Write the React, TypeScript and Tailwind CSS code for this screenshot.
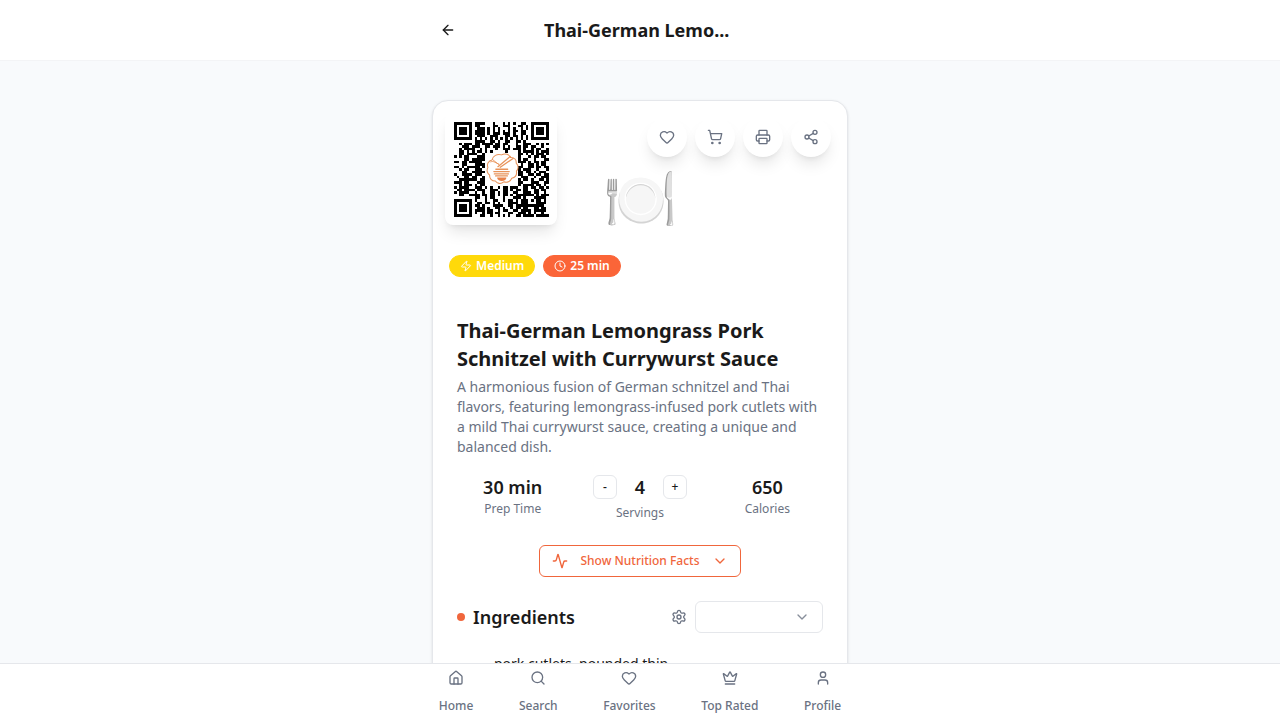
import React from "react";
import {
  Activity,
  ArrowLeft,
  ChevronDown,
  Clock,
  Crown,
  Heart,
  House,
  Printer,
  Search,
  Settings,
  Share2,
  ShoppingCart,
  User,
  Zap,
} from "lucide-react";

const QR: string[] = [
  "#######.####...#...#.#.#..##..#######",
  "#.....#.##.....##..###...##.#.#.....#",
  "#.###.#..###.#.#.#...#.#..#.#.#.###.#",
  "#.###.#.####.#.#.#.#.#.##.##..#.###.#",
  "#.###.#.####.#.###.###.#..##..#.###.#",
  "#.....#..###..###...##.##.#.#.#.....#",
  "#######.#.#.#.#.#.#.#.#.#.#.#.#######",
  "........####..##.#..##..##.#.........",
  "..#.###.##.####.##.##...#..###..#.#.#",
  "...###.###..##.###.#.#..##.##.##..#..",
  "..#.####..#.#...#..###.###.#..#.##..#",
  "..##.#.#.##.#.#.....#....#.####.#.###",
  "..##.####..#.............##.#.#.###.#",
  "#.#.##...###.............#...#.##.##.",
  "....##.#####.............#.##..#...##",
  "##.##.#####..............###.#.##.##.",
  "...##...####..............#..##.#.##.",
  "##.#.#####.#.............##..##.##.##",
  "..#.##..###..............#.###..#...#",
  "...##..#####.............##.##.#.###.",
  "#..####.###..............##..##.##.##",
  ".#..##.##..#..............###..#..###",
  "..#######.##.............#.##.#..##.#",
  "###.##...###.............##...###..##",
  "..#.###.#.##.............#.####.##.#.",
  "#.####..###.#.#..#.##.###..##.##.##.#",
  ".##.####.###..###..##.#.##.##..##.##.",
  "#.####..#..#..##.#.##..##..###.##..#.",
  "..##..####.##.##.#.##.#.#######.#.###",
  "........##..#.##...#...###.#...#####.",
  "#######.#...#..##..#.##.#.###.#.##.#.",
  "#.....#..##.##.#.#...####.###...####.",
  "#.###.#.##.#...####..##.###########..",
  "#.###.#..###.#..##.#..#.##.##..##.##.",
  "#.###.#.####.##..#.##..##.####.#####.",
  "#.....#.#..#.##.##...##..###.#.#..#..",
  "#######...##..#..#.#.#..##.####.#####",
];

const navItems = [
  { label: "Home", Icon: House },
  { label: "Search", Icon: Search },
  { label: "Favorites", Icon: Heart },
  { label: "Top Rated", Icon: Crown },
  { label: "Profile", Icon: User },
];

const actions = [
  { label: "Save to favorites", Icon: Heart },
  { label: "Add to shopping list", Icon: ShoppingCart },
  { label: "Print recipe", Icon: Printer },
  { label: "Share recipe", Icon: Share2 },
];

const title = "Thai-German Lemongrass Pork Schnitzel with Currywurst Sauce";

function shorten(text: string, length: number) {
  return text.length > length ? `${text.slice(0, length)}...` : text;
}

function QrCode() {
  const d = QR.map((row, y) =>
    row
      .split("")
      .map((c, x) => (c === "#" ? `M${x} ${y}h1v1h-1z` : ""))
      .join("")
  ).join("");
  return (
    <svg viewBox="-0.4 -0.4 37.4 37.4" className="size-24" role="img" aria-label="Recipe QR code">
      <path d={d} fill="#000" shapeRendering="crispEdges" />
      <g fill="none" stroke="#e8935a" strokeLinecap="round" strokeLinejoin="round">
        <path
          strokeWidth=".4"
          d="M18.5 12.8c1.5-.9 3 0 3.5 1 1.5-.1 2.4 1 2.2 2.2 1 .9 1 2.3.1 3.1.3 1.5-.5 2.5-1.8 2.8-.5 1.3-1.9 1.9-3.1 1.4-1.2 1-2.6.7-3.3-.3-1.4 0-2.4-1-2.2-2.3-1-.7-1.3-2-.7-3-.5-1.3.2-2.6 1.6-2.9.3-1.6 2-2.6 3.7-2z"
        />
        <path strokeWidth=".35" d="M14.3 15.5c1.2-.6 2.1.7 3.2.9M15 14.6l2.5 2" />
        <path strokeWidth=".5" d="m17.1 17.4 4.8-4M18 17.6l5-3.4" />
        <path strokeWidth=".5" d="M16.3 18.4h4.6M15.5 19.3h6M15.7 20.2h5.5M16.2 21h4.6" />
      </g>
      <path d="M16.8 21.6h3.6a1.8 1.4 0 0 1-3.6 0z" fill="#e8824a" />
    </svg>
  );
}

function RecipeHero() {
  return (
    <div className="relative flex h-48 items-center justify-center">
      <span className="text-6xl" role="img" aria-label="Plate">
        🍽️
      </span>
      <div className="absolute top-3 left-3 rounded-lg bg-white p-2 shadow-lg">
        <QrCode />
      </div>
      <div className="absolute top-4 right-4 flex gap-2">
        {actions.map(({ label, Icon }) => (
          <button
            key={label}
            type="button"
            aria-label={label}
            className="flex size-10 items-center justify-center rounded-full bg-white text-gray-500 shadow-lg"
          >
            <Icon className="size-4" />
          </button>
        ))}
      </div>
      <div className="absolute bottom-4 left-4 flex gap-2 text-xs font-semibold text-white">
        <span className="flex items-center gap-1 rounded-full border border-[#ffd90a] bg-[#ffd90a] px-2.5 py-0.5">
          <Zap className="size-3" />
          Medium
        </span>
        <span className="flex items-center gap-1 rounded-full border border-[#fb6538] bg-[#fb6538] px-2.5 py-0.5">
          <Clock className="size-3" />
          25 min
        </span>
      </div>
    </div>
  );
}

function Stats() {
  const [servings, setServings] = React.useState(4);
  const step =
    "flex size-6 items-center justify-center rounded-md border border-gray-200 bg-white text-xs font-medium";
  return (
    <div className="mt-4 grid grid-cols-3 gap-4 text-center">
      <div>
        <div className="text-lg font-semibold">30 min</div>
        <div className="text-xs text-gray-500">Prep Time</div>
      </div>
      <div>
        <div className="mb-1 flex items-center justify-center gap-2">
          <button
            type="button"
            aria-label="Fewer servings"
            className={step}
            onClick={() => setServings(Math.max(1, servings - 1))}
          >
            -
          </button>
          <span className="w-[30px] text-lg font-semibold">{servings}</span>
          <button
            type="button"
            aria-label="More servings"
            className={step}
            onClick={() => setServings(servings + 1)}
          >
            +
          </button>
        </div>
        <div className="text-xs text-gray-500">Servings</div>
      </div>
      <div>
        <div className="text-lg font-semibold">650</div>
        <div className="text-xs text-gray-500">Calories</div>
      </div>
    </div>
  );
}

export default function App() {
  return (
    <div className="min-h-screen bg-[#f8fafc] font-['Noto_Sans',sans-serif] text-[#1a1a1a]">
      <header className="sticky top-0 z-10 border-b border-gray-100 bg-white">
        <div className="mx-auto flex h-15 max-w-md items-center justify-between px-4">
          <button type="button" aria-label="Back" className="flex size-8 items-center justify-center">
            <ArrowLeft className="size-4" />
          </button>
          <div className="w-48 text-lg font-bold">{shorten(title, 16)}</div>
          <div className="size-8" />
        </div>
      </header>

      <main className="mx-auto max-w-md px-4 pt-[39px] pb-24">
        <article className="rounded-2xl border border-gray-200 bg-white shadow-sm">
          <RecipeHero />
          <div className="p-6">
            <h1 className="text-xl font-bold">{title}</h1>
            <p className="mt-1 text-sm text-gray-500">
              A harmonious fusion of German schnitzel and Thai flavors, featuring lemongrass-infused
              pork cutlets with a mild Thai currywurst sauce, creating a unique and balanced dish.
            </p>
            <Stats />
            <div className="mt-6 flex justify-center">
              <button
                type="button"
                className="flex h-8 items-center gap-3 rounded-md border border-[#f0663c] bg-white px-3 text-xs font-medium text-[#f0663c]"
              >
                <Activity className="size-4" />
                Show Nutrition Facts
                <ChevronDown className="size-4" />
              </button>
            </div>
            <section className="mt-6">
              <div className="flex items-center justify-between">
                <h2 className="flex items-center gap-2 text-lg font-semibold">
                  <span className="size-2 rounded-full bg-[#f0663c]" />
                  Ingredients
                </h2>
                <div className="flex items-center gap-2 text-gray-500">
                  <Settings className="size-4" />
                  <div className="grid items-center">
                    <select
                      aria-label="Measurement units"
                      className="col-start-1 row-start-1 h-8 w-32 appearance-none rounded-md border border-gray-200 bg-white px-3 text-sm"
                    >
                      <option value="" />
                    </select>
                    <ChevronDown className="pointer-events-none col-start-1 row-start-1 mr-[13px] size-4 justify-self-end opacity-80" />
                  </div>
                </div>
              </div>
              <ul className="mt-[21px] pl-[37px] text-sm">
                <li>pork cutlets, pounded thin</li>
              </ul>
            </section>
          </div>
        </article>
      </main>

      <nav className="fixed inset-x-0 bottom-0 z-10 border-t border-gray-200 bg-white">
        <div className="mx-auto flex h-14 max-w-md justify-around pt-1.5">
          {navItems.map(({ label, Icon }) => (
            <a
              key={label}
              href="#"
              className="flex flex-col items-center gap-3 text-xs font-medium text-gray-500"
            >
              <Icon className="size-4" />
              {label}
            </a>
          ))}
        </div>
      </nav>
    </div>
  );
}
